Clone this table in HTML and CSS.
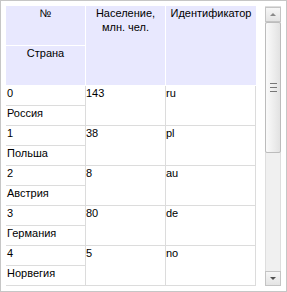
FILE: index.html
```html
<!DOCTYPE html>
<html>
<head>
<meta charset="utf-8">
<link rel="stylesheet" href="styles.css">
</head>
<body>
<div class="frame">
  <div class="grid">
    <div class="head">
      <div class="hcol h1">
        <div class="hcell">№</div>
        <div class="hcell">Страна</div>
      </div>
      <div class="hcol h2">Население,<br>млн. чел.</div>
      <div class="hcol h3">Идентификатор</div>
    </div>
    <div class="rec">
      <div class="c1"><div class="sub">0</div><div class="sub">Россия</div></div>
      <div class="c2">143</div><div class="c3">ru</div>
    </div>
    <div class="rec">
      <div class="c1"><div class="sub">1</div><div class="sub">Польша</div></div>
      <div class="c2">38</div><div class="c3">pl</div>
    </div>
    <div class="rec">
      <div class="c1"><div class="sub">2</div><div class="sub">Австрия</div></div>
      <div class="c2">8</div><div class="c3">au</div>
    </div>
    <div class="rec">
      <div class="c1"><div class="sub">3</div><div class="sub">Германия</div></div>
      <div class="c2">80</div><div class="c3">de</div>
    </div>
    <div class="rec">
      <div class="c1"><div class="sub">4</div><div class="sub">Норвегия</div></div>
      <div class="c2">5</div><div class="c3">no</div>
    </div>
  </div>
  <div class="scroll">
    <div class="sbtn up"><span class="tri-up"></span></div>
    <div class="thumb"><span class="grip"></span><span class="grip"></span><span class="grip"></span></div>
    <div class="track"></div>
    <div class="sbtn down"><span class="tri-down"></span></div>
  </div>
</div>
</body>
</html>
```

FILE: styles.css
```css
html, body {
  margin: 0;
  padding: 0;
  background: #ffffff;
}
body {
  font-family: "Liberation Sans", Arial, sans-serif;
  font-size: 11px;
  color: #000;
}
.frame {
  width: 287px;
  height: 292px;
  box-sizing: border-box;
  border: 1px solid #c6c6c6;
  padding: 5px;
  display: flex;
  gap: 9px;
  background: #fff;
}
.grid {
  width: 250px;
  height: 280px;
  overflow: hidden;
  flex: none;
}
.head {
  display: grid;
  grid-template-columns: 79px 79px 90px;
  column-gap: 1px;
  height: 79px;
  margin-bottom: 1px;
  background: #fff;
}
.hcol {
  background: #e8e8fe;
  text-align: center;
  line-height: 14px;
  padding-top: 0;
  box-sizing: border-box;
}
.h1 {
  background: #fff;
  display: grid;
  grid-template-rows: 39px 39px;
  row-gap: 1px;
}
.hcell {
  background: #e8e8fe;
  padding-top: 0;
  line-height: 14px;
}
.rec {
  display: grid;
  grid-template-columns: 80px 80px 90px;
  height: 40px;
}
.c1, .c2, .c3 {
  box-sizing: border-box;
  border-right: 1px solid #dcdcdc;
  border-bottom: 1px solid #dcdcdc;
}
.c1 {
  border-bottom: none;
}
.sub {
  height: 20px;
  box-sizing: border-box;
  border-bottom: 1px solid #dcdcdc;
  padding: 0 0 0 1px;
  line-height: 15px;
}
.c2, .c3 {
  padding: 0;
  line-height: 15px;
}
.scroll {
  width: 16px;
  height: 280px;
  flex: none;
  display: flex;
  flex-direction: column;
  background: #f0f0f0;
  box-sizing: border-box;
  border: 1px solid #dedede;
}
.sbtn {
  height: 15px;
  flex: none;
  box-sizing: border-box;
  border: 1px solid #c4c4c4;
  background: linear-gradient(#f6f6f6, #e4e4e4);
  display: flex;
  align-items: center;
  justify-content: center;
  margin: 0 -1px;
}
.down { margin-bottom: -1px; }
.tri-up {
  width: 0; height: 0;
  border-left: 3px solid transparent;
  border-right: 3px solid transparent;
  border-bottom: 3px solid #8a8a8a;
}
.tri-down {
  width: 0; height: 0;
  border-left: 3px solid transparent;
  border-right: 3px solid transparent;
  border-top: 3px solid #505050;
}
.thumb {
  height: 131px;
  flex: none;
  box-sizing: border-box;
  border: 1px solid #bcbcbc;
  border-radius: 2px;
  background: linear-gradient(90deg, #fafafa, #ececec 60%, #e2e2e2);
  margin: 0 -1px;
  display: flex;
  flex-direction: column;
  align-items: center;
  justify-content: center;
  gap: 3px;
}
.grip {
  width: 7px;
  height: 1px;
  background: #777;
}
.track {
  flex: 1;
}
```
